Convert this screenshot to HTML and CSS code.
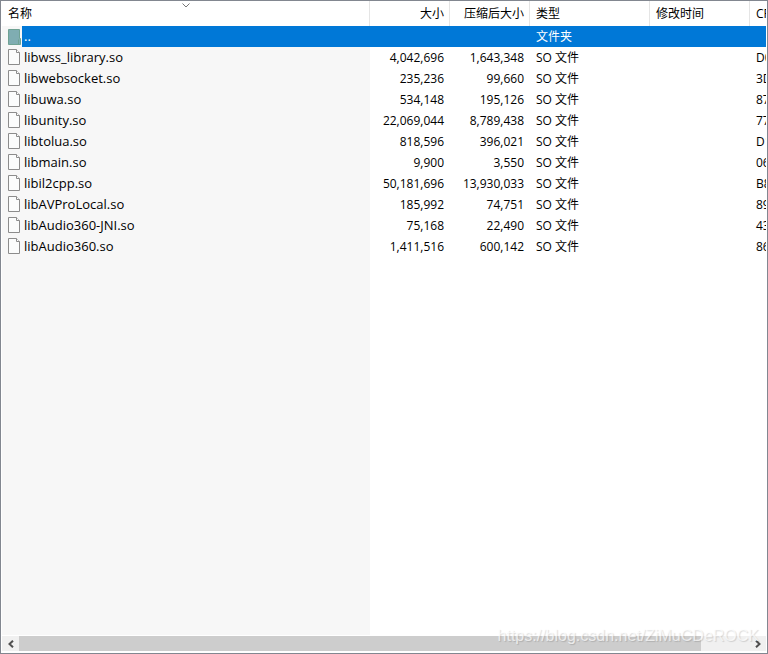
FILE: index.html
```html
<!DOCTYPE html>
<html lang="zh-CN">
<head>
<meta charset="utf-8">
<title>lib</title>
<link rel="stylesheet" href="styles.css">
</head>
<body>
<svg class="defs" aria-hidden="true">
  <symbol id="file" viewBox="0 0 13 16">
    <path d="M.5.5H8.500L11.500 3.500V15.500H.5Z" fill="#fbfcfc" stroke="#8c8c8c"/>
    <path d="M8.500.5V3.500H11.500" fill="#fff" stroke="#8c8c8c"/>
  </symbol>
  <symbol id="folder" viewBox="0 0 13 16">
    <path d="M.5.5H11.500V9.500H12.500V15.500H.5Z" fill="#7fadb2" stroke="#6fa294"/>
    <path d="M10.500 15V10.500" fill="none" stroke="#6fa294"/>
  </symbol>
</svg>
<main class="window">
  <div class="list">
    <table class="files">
      <colgroup><col class="c-name"><col class="c-size"><col class="c-size"><col class="c-type"><col class="c-time"><col></colgroup>
      <thead>
        <tr>
          <th class="name">名称<svg class="sort" viewBox="0 0 8 5" aria-hidden="true"><path d="M.5.5L4 4L7.500.5" fill="none" stroke="#777"/></svg></th>
          <th class="num">大小</th><th class="num">压缩后大小</th><th>类型</th><th>修改时间</th><th>CRC32</th>
        </tr>
      </thead>
      <tbody>
        <tr class="selected"><td class="name"><div class="entry"><svg class="icon"><use href="#folder"/></svg><span class="label">..</span></div></td><td></td><td></td><td>文件夹</td><td></td><td></td></tr>
        <tr><td class="name"><div class="entry"><svg class="icon"><use href="#file"/></svg><span class="label">libwss_library.so</span></div></td><td class="num">4,042,696</td><td class="num">1,643,348</td><td>SO 文件</td><td></td><td>D0</td></tr>
        <tr><td class="name"><div class="entry"><svg class="icon"><use href="#file"/></svg><span class="label">libwebsocket.so</span></div></td><td class="num">235,236</td><td class="num">99,660</td><td>SO 文件</td><td></td><td>3D</td></tr>
        <tr><td class="name"><div class="entry"><svg class="icon"><use href="#file"/></svg><span class="label">libuwa.so</span></div></td><td class="num">534,148</td><td class="num">195,126</td><td>SO 文件</td><td></td><td>87</td></tr>
        <tr><td class="name"><div class="entry"><svg class="icon"><use href="#file"/></svg><span class="label">libunity.so</span></div></td><td class="num">22,069,044</td><td class="num">8,789,438</td><td>SO 文件</td><td></td><td>77</td></tr>
        <tr><td class="name"><div class="entry"><svg class="icon"><use href="#file"/></svg><span class="label">libtolua.so</span></div></td><td class="num">818,596</td><td class="num">396,021</td><td>SO 文件</td><td></td><td>D1</td></tr>
        <tr><td class="name"><div class="entry"><svg class="icon"><use href="#file"/></svg><span class="label">libmain.so</span></div></td><td class="num">9,900</td><td class="num">3,550</td><td>SO 文件</td><td></td><td>06</td></tr>
        <tr><td class="name"><div class="entry"><svg class="icon"><use href="#file"/></svg><span class="label">libil2cpp.so</span></div></td><td class="num">50,181,696</td><td class="num">13,930,033</td><td>SO 文件</td><td></td><td>B8</td></tr>
        <tr><td class="name"><div class="entry"><svg class="icon"><use href="#file"/></svg><span class="label">libAVProLocal.so</span></div></td><td class="num">185,992</td><td class="num">74,751</td><td>SO 文件</td><td></td><td>89</td></tr>
        <tr><td class="name"><div class="entry"><svg class="icon"><use href="#file"/></svg><span class="label">libAudio360-JNI.so</span></div></td><td class="num">75,168</td><td class="num">22,490</td><td>SO 文件</td><td></td><td>43</td></tr>
        <tr><td class="name"><div class="entry"><svg class="icon"><use href="#file"/></svg><span class="label">libAudio360.so</span></div></td><td class="num">1,411,516</td><td class="num">600,142</td><td>SO 文件</td><td></td><td>86</td></tr>
      </tbody>
    </table>
  </div>
  <div class="scrollbar">
    <button class="arrow" aria-label="向左滚动"><svg viewBox="0 0 6 8"><path d="M5 .7L1.500 4L5 7.300" fill="none" stroke="#505050" stroke-width="2"/></svg></button>
    <div class="track"><div class="thumb"></div></div>
    <button class="arrow" aria-label="向右滚动"><svg viewBox="0 0 6 8"><path d="M1 .7L4.500 4L1 7.300" fill="none" stroke="#505050" stroke-width="2"/></svg></button>
  </div>
  <div class="watermark">https://blog.csdn.net/ZiMuCDeROCK</div>
</main>
</body>
</html>
```
FILE: styles.css
```css
* { box-sizing: border-box; }
body {
  margin: 0;
  font-family: "Open Sans", "Noto Sans CJK SC", sans-serif;
  font-size: 12px;
  color: #000;
}
.defs { position: absolute; width: 0; height: 0; }
.window {
  position: relative;
  display: flex;
  flex-direction: column;
  height: 100vh;
  padding: 0 1px 2px;
  border: 1px solid #828790;
  background: #fff;
}
.list {
  flex: 1;
  overflow: hidden;
  margin-bottom: 1px;
  background: linear-gradient(#f7f7f7, #f7f7f7) 0 25px / 368px 100% no-repeat;
}
.files {
  width: 100%;
  table-layout: fixed;
  border-collapse: separate;
  border-spacing: 0;
}
.c-name { width: 368px; }
.c-size { width: 80px; }
.c-type { width: 120px; }
.c-time { width: 100px; }
th, td {
  height: 21px;
  padding: 0 6px;
  line-height: 20px;
  text-align: left;
  font-weight: 400;
  white-space: nowrap;
  overflow: hidden;
}
th:last-child, td:last-child { padding-right: 0; }
th {
  position: relative;
  height: 25px;
  border-right: 1px solid #e5e5e5;
}
th:last-child { border-right: 0; }
th.num { padding-right: 5px; }
.num { text-align: right; }
.sort {
  position: absolute;
  top: 2px;
  left: 50%;
  width: 8px;
  height: 5px;
  margin-left: -4px;
}
td.name { padding: 0 0 0 6px; font-size: 13px; }
.entry { display: flex; height: 21px; padding-bottom: 1px; align-items: center; }
.icon { flex: none; width: 13px; height: 16px; }
.label { flex: 1; margin-left: 1px; padding-left: 2px; }
.selected { color: #fff; }
.selected td:not(.name), .selected .label { background: #0078d7; }
.selected .entry { padding-bottom: 0; }
.selected .label { height: 21px; }
.scrollbar { display: flex; height: 15px; background: #f0f0f0; }
.arrow {
  display: flex;
  width: 17px;
  padding: 0;
  border: 0;
  background: #f0f0f0;
  align-items: center;
  justify-content: center;
}
.arrow svg { width: 6px; height: 8px; }
.track { flex: 1; }
.thumb { width: 93.4%; height: 100%; background: #cdcdcd; }
.watermark {
  position: absolute;
  right: 8px;
  bottom: 8px;
  font: 16px/18px "Liberation Sans", sans-serif;
  color: rgba(255, 255, 255, .7);
  text-shadow: 1px 1px 1px rgba(0, 0, 0, .14);
  pointer-events: none;
}
```
